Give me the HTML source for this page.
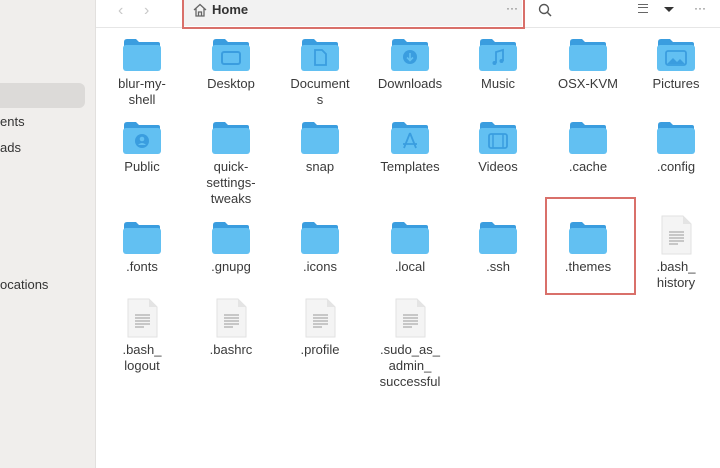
<!DOCTYPE html>
<html><head><style>
html,body{margin:0;width:720px;height:468px;overflow:hidden;background:#fff;font-family:"Liberation Sans",sans-serif;position:relative}
.main{position:absolute;left:96px;top:0;width:624px;height:468px;background:#ffffff}
.sb{position:absolute;left:0;top:0;width:95px;height:468px;background:#f0eeec;border-right:1px solid #e2e0de}
.sel{position:absolute;left:0;top:83px;width:85px;height:25px;background:#dcdad8;border-radius:0 6px 6px 0}
.st{position:absolute;font-size:13px;color:#333}
.hdr{position:absolute;left:96px;top:0;width:624px;height:27px;border-bottom:1px solid #e6e6e6;background:#fff}
.it{position:absolute;width:88px;text-align:center;font-size:13px;line-height:16px;color:#3a3a3a}
.it svg{display:block;margin:0 auto}
.box{position:absolute;border:2px solid #d9706a}
</style></head><body>
<div class="main"></div>
<div class="sb"><div class="sel"></div>
<div class="st" style="left:0;top:114px">ents</div>
<div class="st" style="left:0;top:140px">ads</div>
<div class="st" style="left:0;top:277px">ocations</div>
</div>
<div class="hdr">
<div style="position:absolute;left:22px;top:2px;font-size:16px;color:#c8c8c8">&#8249;</div>
<div style="position:absolute;left:48px;top:2px;font-size:16px;color:#c8c8c8">&#8250;</div>
<div style="position:absolute;left:88px;top:-2px;width:338px;height:28px;background:#f2f2f2"></div>
<svg style="position:absolute;left:97px;top:3px" width="14" height="14" viewBox="0 0 14 14"><path d="M1 7L7 1.5L13 7M3 5.5V13H11V5.5M5.5 13V9H8.5V13" fill="none" stroke="#666" stroke-width="1.3"/></svg>
<div style="position:absolute;left:116px;top:2px;font-size:13px;font-weight:bold;color:#333">Home</div>
<div style="position:absolute;left:410px;top:1px;font-size:12px;color:#666">···</div>
<svg style="position:absolute;left:442px;top:3px" width="14" height="14"><circle cx="6" cy="6" r="4.5" fill="none" stroke="#555" stroke-width="1.4"/><path d="M9.5 9.5L13 13" stroke="#555" stroke-width="1.5"/></svg>
<div style="position:absolute;left:542px;top:4px;width:10px;height:7px;border-top:1px solid #666;border-bottom:1px solid #666"></div><div style="position:absolute;left:542px;top:7px;width:10px;height:1px;background:#666"></div>
<div style="position:absolute;left:568px;top:7px;width:0;height:0;border-left:5px solid transparent;border-right:5px solid transparent;border-top:5px solid #333"></div>
<div style="position:absolute;left:598px;top:1px;font-size:12px;color:#666">···</div>
</div>
<div class="box" style="left:182px;top:-4px;width:339px;height:29px"></div>
<div class="box" style="left:545px;top:197px;width:87px;height:94px"></div>
<svg width="0" height="0" style="position:absolute"><defs>
<symbol id="f" viewBox="0 0 40 33"><path d="M2 4Q2 1 5 1H14L17 4H36Q38 4 38 6V10H2Z" fill="#3a9ddf"/><rect x="1" y="7" width="38" height="26" rx="3" fill="#62c0f2"/></symbol>
<symbol id="d" viewBox="0 0 33 40"><path d="M2 1H23L31 9V39H2Z" fill="#f4f4f4" stroke="#e2e2e2"/><path d="M23 1V9H31" fill="#e4e4e4"/><g stroke="#9a9a9a" stroke-width="1"><path d="M9 17H24M9 20H24M9 23H24M9 26H24M9 29H18"/></g></symbol>
</defs></svg>
<div class="it" style="left:98px;top:38px"><svg width="40" height="33"><use href="#f"/></svg><div style="margin-top:5px">blur-my-<br>shell</div></div>
<div class="it" style="left:187px;top:38px"><svg width="40" height="33"><use href="#f"/><rect x="11" y="14" width="18" height="12" rx="2" fill="none" stroke="#3a9ddf" stroke-width="2"/></svg><div style="margin-top:5px">Desktop</div></div>
<div class="it" style="left:276px;top:38px"><svg width="40" height="33"><use href="#f"/><path d="M15 12H22L26 16V27H15Z" fill="none" stroke="#3a9ddf" stroke-width="1.8"/></svg><div style="margin-top:5px">Document<br>s</div></div>
<div class="it" style="left:366px;top:38px"><svg width="40" height="33"><use href="#f"/><circle cx="20" cy="19" r="7" fill="#3a9ddf"/><path d="M20 15V22M17 19.5L20 22.5L23 19.5" stroke="#62c0f2" stroke-width="1.6" fill="none"/></svg><div style="margin-top:5px">Downloads</div></div>
<div class="it" style="left:454px;top:38px"><svg width="40" height="33"><use href="#f"/><path d="M18 25V14L25 12V23" stroke="#3a9ddf" stroke-width="1.8" fill="none"/><circle cx="16.5" cy="25" r="2" fill="#3a9ddf"/><circle cx="23.5" cy="23" r="2" fill="#3a9ddf"/></svg><div style="margin-top:5px">Music</div></div>
<div class="it" style="left:544px;top:38px"><svg width="40" height="33"><use href="#f"/></svg><div style="margin-top:5px">OSX-KVM</div></div>
<div class="it" style="left:632px;top:38px"><svg width="40" height="33"><use href="#f"/><rect x="10" y="13" width="20" height="14" rx="2" fill="none" stroke="#3a9ddf" stroke-width="1.8"/><path d="M11 26L17 20L21 24L24 21L29 26Z" fill="#3a9ddf"/></svg><div style="margin-top:5px">Pictures</div></div>
<div class="it" style="left:98px;top:121px"><svg width="40" height="33"><use href="#f"/><circle cx="20" cy="20" r="7" fill="#3a9ddf"/><circle cx="20" cy="18" r="2.3" fill="#62c0f2"/><path d="M16 24Q20 20 24 24" fill="#62c0f2"/></svg><div style="margin-top:5px">Public</div></div>
<div class="it" style="left:187px;top:121px"><svg width="40" height="33"><use href="#f"/></svg><div style="margin-top:5px">quick-<br>settings-<br>tweaks</div></div>
<div class="it" style="left:276px;top:121px"><svg width="40" height="33"><use href="#f"/></svg><div style="margin-top:5px">snap</div></div>
<div class="it" style="left:366px;top:121px"><svg width="40" height="33"><use href="#f"/><path d="M20 12L14 27M20 12L26 27M13 23H27" stroke="#3a9ddf" stroke-width="1.8" fill="none"/></svg><div style="margin-top:5px">Templates</div></div>
<div class="it" style="left:454px;top:121px"><svg width="40" height="33"><use href="#f"/><rect x="11" y="13" width="18" height="14" rx="2" fill="none" stroke="#3a9ddf" stroke-width="1.8"/><path d="M15 13V27M25 13V27" stroke="#3a9ddf" stroke-width="1.5"/></svg><div style="margin-top:5px">Videos</div></div>
<div class="it" style="left:544px;top:121px"><svg width="40" height="33"><use href="#f"/></svg><div style="margin-top:5px">.cache</div></div>
<div class="it" style="left:632px;top:121px"><svg width="40" height="33"><use href="#f"/></svg><div style="margin-top:5px">.config</div></div>
<div class="it" style="left:98px;top:221px"><svg width="40" height="33"><use href="#f"/></svg><div style="margin-top:5px">.fonts</div></div>
<div class="it" style="left:187px;top:221px"><svg width="40" height="33"><use href="#f"/></svg><div style="margin-top:5px">.gnupg</div></div>
<div class="it" style="left:276px;top:221px"><svg width="40" height="33"><use href="#f"/></svg><div style="margin-top:5px">.icons</div></div>
<div class="it" style="left:366px;top:221px"><svg width="40" height="33"><use href="#f"/></svg><div style="margin-top:5px">.local</div></div>
<div class="it" style="left:454px;top:221px"><svg width="40" height="33"><use href="#f"/></svg><div style="margin-top:5px">.ssh</div></div>
<div class="it" style="left:544px;top:221px"><svg width="40" height="33"><use href="#f"/></svg><div style="margin-top:5px">.themes</div></div>
<div class="it" style="left:632px;top:215px"><svg width="33" height="40"><use href="#d"/></svg><div style="margin-top:4px">.bash_<br>history</div></div>
<div class="it" style="left:98px;top:298px"><svg width="33" height="40"><use href="#d"/></svg><div style="margin-top:4px">.bash_<br>logout</div></div>
<div class="it" style="left:187px;top:298px"><svg width="33" height="40"><use href="#d"/></svg><div style="margin-top:4px">.bashrc</div></div>
<div class="it" style="left:276px;top:298px"><svg width="33" height="40"><use href="#d"/></svg><div style="margin-top:4px">.profile</div></div>
<div class="it" style="left:366px;top:298px"><svg width="33" height="40"><use href="#d"/></svg><div style="margin-top:4px">.sudo_as_<br>admin_<br>successful</div></div>
</body></html>
